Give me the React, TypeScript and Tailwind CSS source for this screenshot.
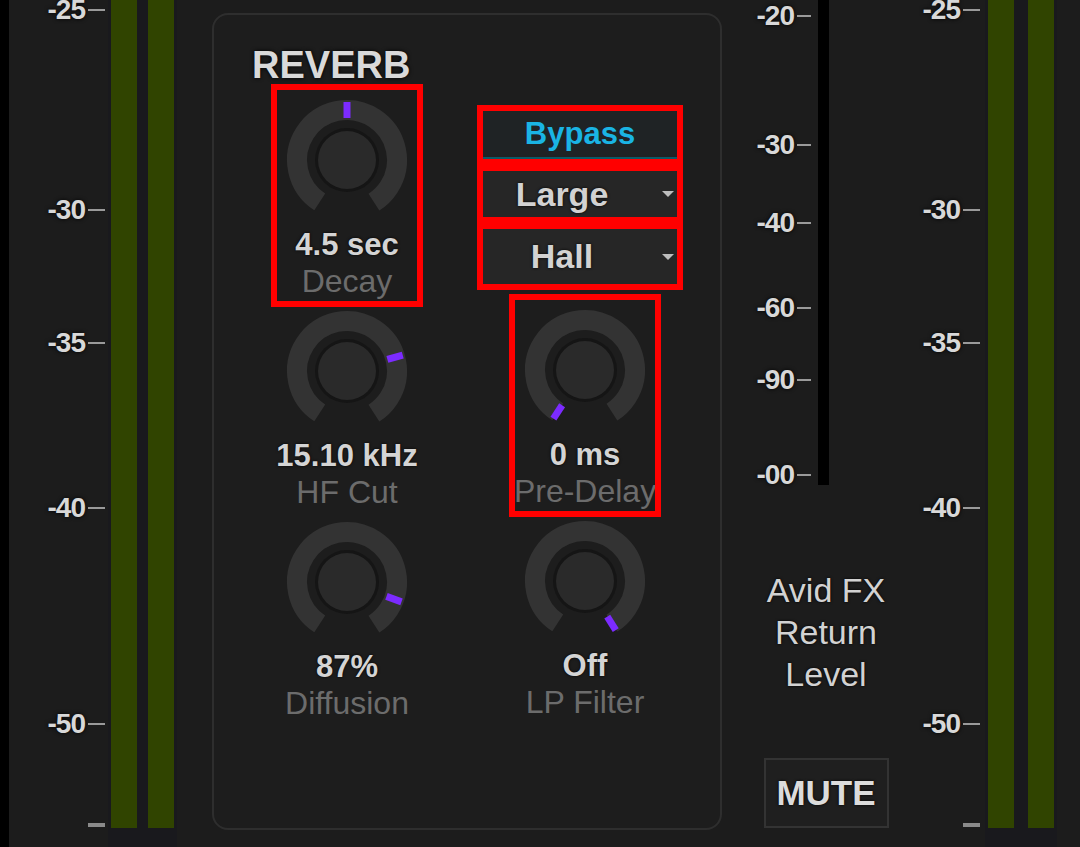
import React from 'react';

type Tick = { label: string; y: number };

const OUTER_TICKS: Tick[] = [
  { label: '-25', y: 10 },
  { label: '-30', y: 210 },
  { label: '-35', y: 343 },
  { label: '-40', y: 508 },
  { label: '-50', y: 724 },
  { label: '', y: 825 },
];

const RETURN_TICKS: Tick[] = [
  { label: '-20', y: 16 },
  { label: '-30', y: 145 },
  { label: '-40', y: 223 },
  { label: '-60', y: 308 },
  { label: '-90', y: 380 },
  { label: '-00', y: 475 },
];

const font = { fontFamily: '"Liberation Sans", Arial, sans-serif' };

// meter scale: labels with a dash, placed at their dB position
function Scale({ ticks, dash }: { ticks: Tick[]; dash: number }) {
  return (
    <div className="relative h-full flex-1">
      {ticks.map((t) => (
        <div
          key={t.label + t.y}
          className="absolute right-0 flex h-[30px] items-center gap-[3px]"
          style={{ top: t.y - 15 }}
        >
          {t.label && (
            <span className="text-[28px] font-bold leading-none tracking-[-1px] text-[#d8d8d8] [text-shadow:0_0_4px_#000]">
              {t.label}
            </span>
          )}
          <span
            className={t.label ? 'h-[2px] bg-[#9a9a9a]' : 'h-[4px] bg-[#8a8a8a]'}
            style={{ width: dash }}
          />
        </div>
      ))}
    </div>
  );
}

function Meter({ wide }: { wide?: boolean }) {
  return (
    <div className={`flex h-full bg-[#19191d] px-[3px] ${wide ? 'gap-[14px]' : 'gap-[11px]'}`}>
      <div className="h-[828px] w-[26px] bg-[#304400]" />
      <div className="h-[828px] w-[26px] bg-[#304400]" />
    </div>
  );
}

function polar(r: number, deg: number) {
  const a = (deg * Math.PI) / 180;
  return { x: 65 + r * Math.sin(a), y: 65 - r * Math.cos(a) };
}

function Knob({ angle }: { angle: number }) {
  const c = 2 * Math.PI * 50;
  const arc = (294 / 360) * c;
  const p1 = polar(42, angle);
  const p2 = polar(58, angle);
  return (
    <svg width="130" height="130" viewBox="0 0 130 130" className="mt-[5px] shrink-0">
      <circle
        cx="65"
        cy="65"
        r="50"
        fill="none"
        stroke="#333333"
        strokeWidth="20"
        strokeDasharray={`${arc} ${c}`}
        transform="rotate(123 65 65)"
      />
      <circle cx="65" cy="65" r="32" fill="#151515" />
      <circle cx="65" cy="65" r="29" fill="#2a2a2a" />
      <line x1={p1.x} y1={p1.y} x2={p2.x} y2={p2.y} stroke="#7c2bff" strokeWidth="7" />
    </svg>
  );
}

function KnobCell({
  angle,
  value,
  label,
  marked,
}: {
  angle: number;
  value: string;
  label: string;
  marked?: boolean;
}) {
  return (
    <div
      className={`flex h-[211px] w-[140px] flex-col items-center ${
        marked ? 'outline-[6px] outline-solid outline-[#ff0000]' : ''
      }`}
    >
      <Knob angle={angle} />
      <div className="mt-[2px] whitespace-nowrap text-[31px] font-bold leading-[36px] text-[#d4d4d4] [text-shadow:0_0_3px_#000]">
        {value}
      </div>
      <div className="whitespace-nowrap text-[32px] leading-[36px] text-[#6c6c6c]">{label}</div>
    </div>
  );
}

function Caret() {
  return (
    <svg width="12" height="6" viewBox="0 0 12 6">
      <path d="M0 0 L12 0 L6 6 Z" fill="#bdbdbd" />
    </svg>
  );
}

function Dropdown({ label }: { label: string }) {
  return (
    <div className="flex h-full w-full items-center bg-[#262626]">
      <span className="flex-1 text-center text-[34px] font-bold text-[#d2d2d2] [text-shadow:0_0_3px_#000]">
        {label}
      </span>
      <span className="flex w-[36px] justify-end pr-[3px]">
        <Caret />
      </span>
    </div>
  );
}

export default function App() {
  return (
    <div className="flex h-[847px] w-[1080px] items-start overflow-hidden bg-[#1c1c1c]" style={font}>
      {/* left input meter */}
      <div className="w-[9px] self-stretch bg-black" />
      <div className="flex h-[847px] w-[96px]">
        <Scale ticks={OUTER_TICKS} dash={17} />
      </div>
      <div className="ml-[3px] h-[847px]">
        <Meter />
      </div>

      {/* reverb panel */}
      <div className="ml-[35px] mt-[13px] h-[817px] w-[510px] shrink-0 rounded-[16px] border-2 border-[#2e2e2e] bg-[#1d1d1d]">
        <div className="pl-[38px] pt-[30px] text-[38px] font-bold leading-[40px] text-[#d9d9d9] [text-shadow:0_0_4px_#000]">
          REVERB
        </div>
        <div className="flex">
          <div className="ml-[63px] flex flex-col pt-[5px]">
            <KnobCell angle={0} value="4.5 sec" label="Decay" marked />
            <KnobCell angle={74} value="15.10 kHz" label="HF Cut" />
            <KnobCell angle={110} value="87%" label="Diffusion" />
          </div>
          <div className="ml-[98px] flex flex-col pt-[20px]">
            <div className="-ml-[38px] flex w-[206px] flex-col">
              <div className="h-[60px] border-[6px] border-[#ff0000]">
                <div className="flex h-full items-center justify-center border-b-2 border-[#0c5a68] bg-[#1f2325] text-[31px] font-bold text-[#1ab4e4]">
                  Bypass
                </div>
              </div>
              <div className="h-[58px] border-[6px] border-[#ff0000]">
                <Dropdown label="Large" />
              </div>
              <div className="h-[67px] border-[6px] border-[#ff0000]">
                <Dropdown label="Hall" />
              </div>
            </div>
            <div className="mt-[10px]">
              <KnobCell angle={-147} value="0 ms" label="Pre-Delay" marked />
            </div>
            <KnobCell angle={148} value="Off" label="LP Filter" />
          </div>
        </div>
      </div>

      {/* FX return */}
      <div className="flex h-[847px] w-[188px] flex-col">
        <div className="flex h-[485px]">
          <div className="flex w-[89px]">
            <Scale ticks={RETURN_TICKS} dash={14} />
          </div>
          <div className="ml-[7px] w-[11px] bg-black" />
        </div>
        <div className="ml-[34px] flex w-[140px] flex-col items-center">
          <div className="mt-[84px] whitespace-nowrap text-center text-[34px] leading-[42px] text-[#d2d2d2] [text-shadow:0_0_3px_#000]">
            Avid FX
            <br />
            Return
            <br />
            Level
          </div>
          <div className="mt-[63px] flex h-[70px] w-[125px] items-center justify-center border-2 border-[#333333] bg-[#1f1f1f] text-[35px] font-bold text-[#dcdcdc] [text-shadow:0_0_3px_#000]">
            MUTE
          </div>
        </div>
      </div>

      {/* right output meter */}
      <div className="flex h-[847px] w-[70px]">
        <Scale ticks={OUTER_TICKS} dash={17} />
      </div>
      <div className="ml-[5px] h-[847px]">
        <Meter wide />
      </div>
    </div>
  );
}
